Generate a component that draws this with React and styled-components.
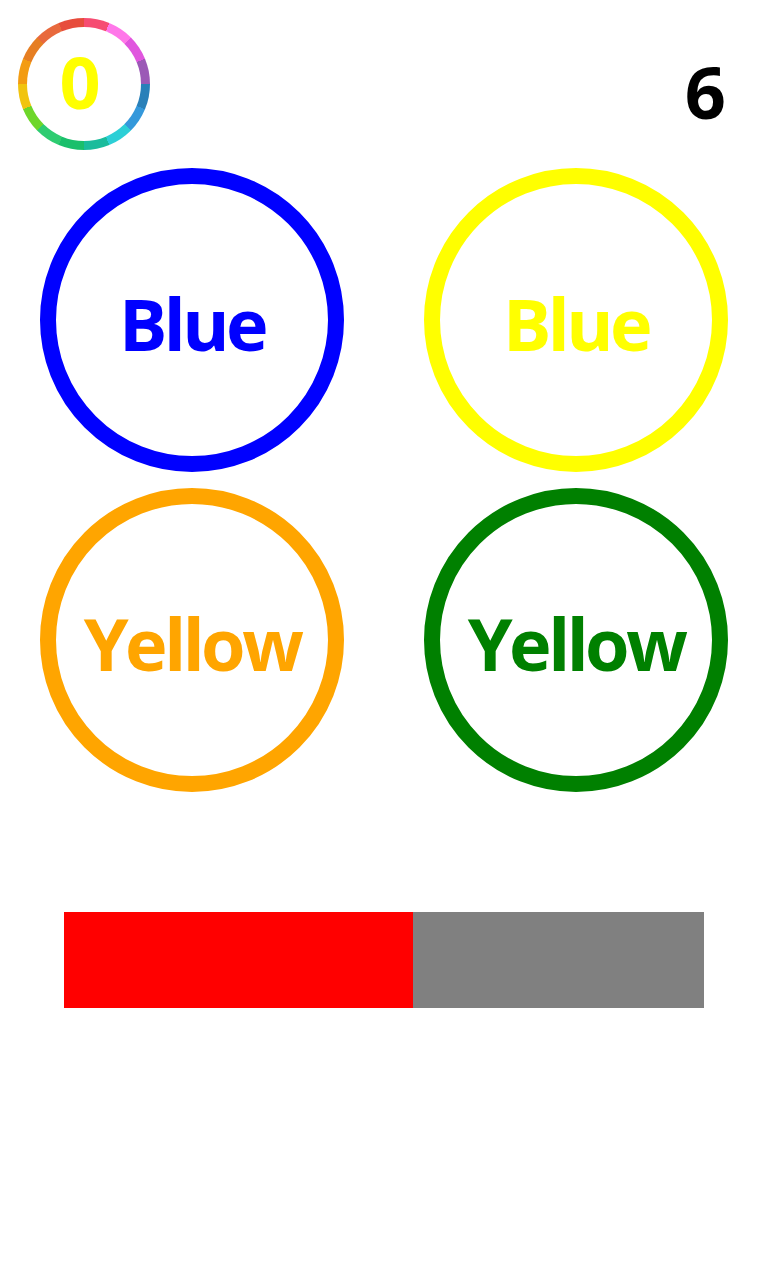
import React from "react";
import styled, { createGlobalStyle } from "styled-components";

const GlobalStyle = createGlobalStyle`
  html, body {
    margin: 0;
    padding: 0;
    background: #ffffff;
  }
  body {
    font-family: "Open Sans", "Noto Sans", sans-serif;
  }
`;

const CHOICES = [
  { word: "Blue", color: "#0000ff" },
  { word: "Blue", color: "#ffff00" },
  { word: "Yellow", color: "#ffa500" },
  { word: "Yellow", color: "#008000" },
];

const TIME_LEFT = 6;
const PROGRESS = 54.5;

const App = () => (
  <Page>
    <GlobalStyle />
    <Header>
      <ScoreRing>
        <ScoreInner>
          <ScoreText>0</ScoreText>
        </ScoreInner>
      </ScoreRing>
      <Timer>{TIME_LEFT}</Timer>
    </Header>

    <Choices>
      {CHOICES.map((c, i) => (
        <Cell key={i}>
          <Choice $color={c.color}>{c.word}</Choice>
        </Cell>
      ))}
    </Choices>

    <Bar>
      <BarFill style={{ width: `${PROGRESS}%` }} />
    </Bar>
  </Page>
);

const Page = styled.div`
  width: 768px;
  min-height: 1280px;
  background: #ffffff;
`;

const Header = styled.div`
  display: flex;
  justify-content: space-between;
  align-items: flex-start;
  height: 150px;
  padding: 18px 42px 0 18px;
  box-sizing: border-box;
`;

const ScoreRing = styled.div`
  width: 132px;
  height: 132px;
  padding: 9px;
  box-sizing: border-box;
  border-radius: 50%;
  background: conic-gradient(
    #f64c72 0deg 22.5deg,
    #ff77e9 22.5deg 45deg,
    #e056de 45deg 67.5deg,
    #9b59b6 67.5deg 90deg,
    #2980b9 90deg 112.5deg,
    #3498db 112.5deg 135deg,
    #2ccfd6 135deg 157.5deg,
    #1abc9c 157.5deg 180deg,
    #1abf6b 180deg 202.5deg,
    #2ecc71 202.5deg 225deg,
    #6ed62a 225deg 247.5deg,
    #f1c40f 247.5deg 270deg,
    #f39c12 270deg 292.5deg,
    #e67e22 292.5deg 315deg,
    #e8693d 315deg 337.5deg,
    #e74c3c 337.5deg 360deg
  );
`;

const ScoreInner = styled.div`
  width: 100%;
  height: 100%;
  border-radius: 50%;
  background: #ffffff;
  display: flex;
  align-items: center;
  justify-content: center;
`;

const ScoreText = styled.span`
  font-size: 72px;
  font-weight: 700;
  line-height: 1;
  color: #ffff00;
  padding: 0 8px 6px 0;
`;

const Timer = styled.span`
  margin-top: 37px;
  font-size: 72px;
  font-weight: 700;
  line-height: 1;
  color: #000000;
`;

const Choices = styled.div`
  display: grid;
  grid-template-columns: 384px 384px;
  margin-top: 18px;
  row-gap: 16px;
`;

const Cell = styled.div`
  display: flex;
  justify-content: center;
`;

const Choice = styled.div`
  width: 304px;
  height: 304px;
  box-sizing: border-box;
  border: 16px solid ${(p) => p.$color};
  border-radius: 50%;
  display: flex;
  align-items: center;
  justify-content: center;
  padding-top: 6px;
  color: ${(p) => p.$color};
  font-size: 72px;
  font-weight: 700;
  line-height: 1;
  letter-spacing: -3.5px;
  white-space: nowrap;
`;

const Bar = styled.div`
  margin: 120px 64px 0;
  height: 96px;
  background: #808080;
  display: flex;
`;

const BarFill = styled.div`
  height: 100%;
  background: #ff0000;
`;

export default App;
